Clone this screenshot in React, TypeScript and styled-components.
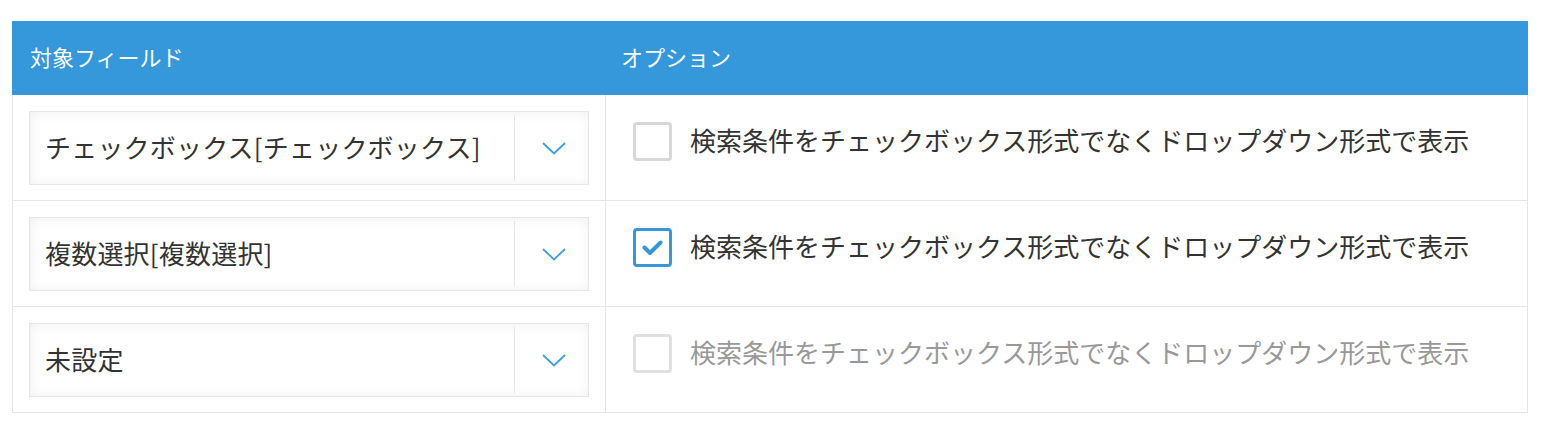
import styled, { createGlobalStyle } from "styled-components";

const GlobalStyle = createGlobalStyle`
  body {
    margin: 0;
    background: #fff;
    font-family: "Noto Sans CJK JP", "Noto Sans", sans-serif;
  }
`;

const Page = styled.div`
  padding: 21px 24px 0 12px;
`;

const Table = styled.table`
  width: 100%;
  border-collapse: collapse;
  table-layout: fixed;
`;

const HeadCell = styled.th<{ $indent?: number }>`
  height: 73px;
  padding: 0 0 4px ${(p) => p.$indent ?? 17}px;
  background-color: #3498db;
  border: 1px solid #3498db;
  color: #fff;
  font-size: 22px;
  font-weight: 400;
  text-align: left;
  box-sizing: border-box;
`;

const Cell = styled.td`
  border: 1px solid #e3e7e8;
  vertical-align: top;
`;

const FieldCell = styled(Cell)`
  padding: 16px 16px 15px 16px;
`;

const OptionCell = styled(Cell)`
  padding: 27px 0 0 27px;
`;

const Select = styled.div`
  display: flex;
  height: 74px;
  box-sizing: border-box;
  border: 1px solid #e3e7e8;
  background: #fff;
  box-shadow: inset 1px 1px 12px #f0f0f0;
`;

const SelectValue = styled.div`
  flex: 1;
  display: flex;
  align-items: center;
  padding: 0 0 3px 15px;
  font-size: 26px;
  letter-spacing: 0.2px;
  color: #333;
  white-space: nowrap;
  overflow: hidden;
`;

const SelectArrow = styled.div`
  width: 74px;
  margin: 3px 0;
  border-left: 1px solid #e3e7e8;
  display: flex;
  align-items: center;
  justify-content: center;
  padding-left: 4px;
  box-sizing: border-box;
`;

const CheckRow = styled.label<{ $disabled?: boolean }>`
  display: flex;
  align-items: center;
  gap: 18px;
  font-size: 26px;
  line-height: 35px;
  color: ${(p) => (p.$disabled ? "#999" : "#333")};
  white-space: nowrap;
`;

const LabelText = styled.span`
  padding-bottom: 4px;
`;

const Box = styled.span<{ $checked?: boolean; $disabled?: boolean }>`
  width: 39px;
  height: 39px;
  box-sizing: border-box;
  border-radius: 4px;
  border: 3px solid
    ${(p) => (p.$checked ? "#3498db" : p.$disabled ? "#e0e0e0" : "#d8d8d8")};
  background: #fff;
  display: flex;
  align-items: center;
  justify-content: center;
  flex-shrink: 0;
`;

function Chevron() {
  return (
    <svg width="24" height="13" viewBox="0 0 24 13">
      <polyline
        points="1,1 12,11.5 23,1"
        fill="none"
        stroke="#3f9ee0"
        strokeWidth="1.8"
      />
    </svg>
  );
}

function Tick() {
  return (
    <svg width="21" height="16" viewBox="0 0 21 16">
      <polyline
        points="2.5,7.5 8,13 18.5,2.5"
        fill="none"
        stroke="#3498db"
        strokeWidth="4"
        strokeLinecap="round"
        strokeLinejoin="round"
      />
    </svg>
  );
}

const rows = [
  { field: "チェックボックス[チェックボックス]", checked: false, disabled: false },
  { field: "複数選択[複数選択]", checked: true, disabled: false },
  { field: "未設定", checked: false, disabled: true },
];

const label = "検索条件をチェックボックス形式でなくドロップダウン形式で表示";

export default function App() {
  return (
    <Page>
      <GlobalStyle />
      <Table>
        <colgroup>
          <col style={{ width: 593 }} />
          <col />
        </colgroup>
        <thead>
          <tr>
            <HeadCell>対象フィールド</HeadCell>
            <HeadCell $indent={15}>オプション</HeadCell>
          </tr>
        </thead>
        <tbody>
          {rows.map((r) => (
            <tr key={r.field}>
              <FieldCell>
                <Select>
                  <SelectValue>{r.field}</SelectValue>
                  <SelectArrow>
                    <Chevron />
                  </SelectArrow>
                </Select>
              </FieldCell>
              <OptionCell>
                <CheckRow $disabled={r.disabled}>
                  <Box $checked={r.checked} $disabled={r.disabled}>
                    {r.checked && <Tick />}
                  </Box>
                  <LabelText>{label}</LabelText>
                </CheckRow>
              </OptionCell>
            </tr>
          ))}
        </tbody>
      </Table>
    </Page>
  );
}
